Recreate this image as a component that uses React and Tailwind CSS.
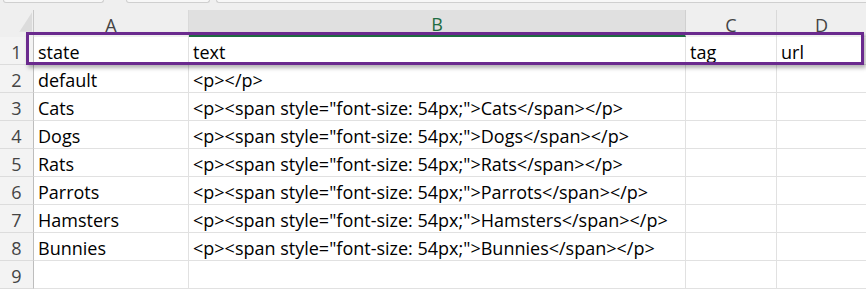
import React from "react";

const rows = [
  ["state", "text", "tag", "url"],
  ["default", "<p></p>", "", ""],
  ["Cats", '<p><span style="font-size: 54px;">Cats</span></p>', "", ""],
  ["Dogs", '<p><span style="font-size: 54px;">Dogs</span></p>', "", ""],
  ["Rats", '<p><span style="font-size: 54px;">Rats</span></p>', "", ""],
  ["Parrots", '<p><span style="font-size: 54px;">Parrots</span></p>', "", ""],
  ["Hamsters", '<p><span style="font-size: 54px;">Hamsters</span></p>', "", ""],
  ["Bunnies", '<p><span style="font-size: 54px;">Bunnies</span></p>', "", ""],
  ["", "", "", ""],
];

const cols = "grid grid-cols-[34px_155px_497px_91px_89px]";

export default function App() {
  return (
    <div
      className="relative w-[866px] h-[290px] overflow-hidden bg-white"
      style={{ fontFamily: '"Open Sans", "Noto Sans", sans-serif' }}
    >
      {/* tab strip */}
      <div className="h-[10px] bg-[#efefef] flex items-start">
        <div className="ml-[3px] w-[101px] h-[3px] bg-[#f7f7f7] border-x border-b border-[#cfcfcf] rounded-b-[4px]" />
        <div className="ml-[22px] w-[84px] h-[3px] bg-[#f7f7f7] border-x border-b border-[#cfcfcf] rounded-b-[4px]" />
        <div className="ml-[6px] flex-1 h-[3px] bg-[#f7f7f7] border-l border-b border-[#cfcfcf] rounded-bl-[4px]" />
      </div>

      {/* column headers */}
      <div className={`${cols} h-[27px] text-[18px] leading-none`}>
        <div className="bg-[#efefef] border-r border-[#c8c8c8] flex items-end justify-end">
          <svg width="34" height="27" viewBox="0 0 34 27">
            <polygon points="33,2 20,22 33,22" fill="#dcdcdc" />
          </svg>
        </div>
        <div className="bg-[#efefef] border-r border-[#d9d9d9] flex items-center justify-center pt-[2px] text-[#444]">A</div>
        <div className="bg-[#e0e0e0] border-r border-[#d0d0d0] border-b-2 border-b-[#1e6c41] flex items-center justify-center pt-[2px] text-[#1e6c41]">B</div>
        <div className="bg-[#efefef] border-r border-[#d9d9d9] flex items-center justify-center pt-[2px] text-[#444]">C</div>
        <div className="bg-[#efefef] flex items-center justify-center pt-[2px] text-[#444]">D</div>
      </div>

      {/* rows */}
      {rows.map((r, i) => (
        <div key={i} className={`${cols} h-[28px] text-[18px] leading-none`}>
          <div className="bg-[#f3f3f3] border-r border-[#bdbdbd] border-b border-b-[#dcdcdc] flex items-center justify-center pt-[3px] text-[#444]">
            {i + 1}
          </div>
          {r.map((c, j) => (
            <div
              key={j}
              className={`border-b border-[#e1e1e1] ${j < 3 ? "border-r" : ""} flex items-center pl-[4px] pt-[3px] text-black whitespace-nowrap overflow-hidden`}
            >
              {c}
            </div>
          ))}
        </div>
      ))}

      {/* selection box around row 1 */}
      <div className="absolute left-[26px] top-[32px] w-[838px] h-[33px] border-[3px] border-[#6a2a8e] shadow-[2px_3px_4px_rgba(0,0,0,0.3)] pointer-events-none" />
    </div>
  );
}
